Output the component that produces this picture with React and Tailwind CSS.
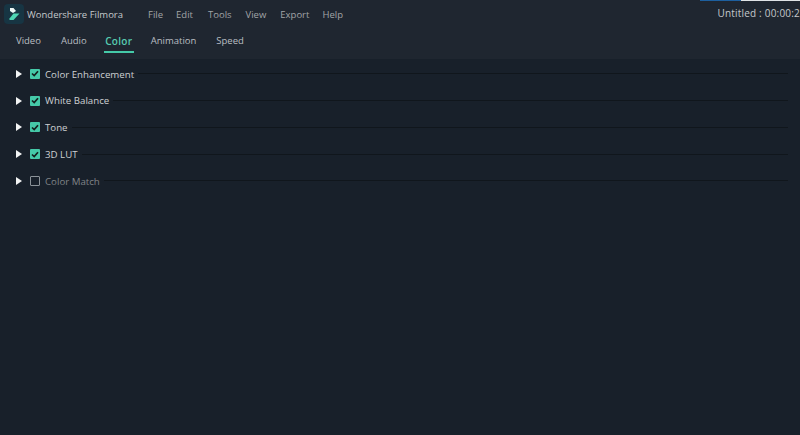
const font = { fontFamily: '"Open Sans", sans-serif' };

function Row({ label, checked }) {
  return (
    <div className="flex h-[26.75px] items-center pl-[16px] pr-[12px]">
      <svg width="6" height="8" viewBox="0 0 6 8" className="shrink-0">
        <path d="M0 0 L6 4 L0 8 Z" fill="#f2f4f4" />
      </svg>
      {checked ? (
        <div className="ml-[8px] flex h-[10px] w-[10px] shrink-0 items-center justify-center rounded-[1px] bg-[#45c9a8]">
          <svg width="8" height="7" viewBox="0 0 8 7">
            <path d="M1 3.5 L3.2 5.6 L7 1.2" fill="none" stroke="#14201f" strokeWidth="1.7" />
          </svg>
        </div>
      ) : (
        <div className="ml-[8px] h-[10px] w-[10px] shrink-0 rounded-[1px] border border-[#8b9298]" />
      )}
      <span className={`ml-[5px] whitespace-nowrap pt-[1px] text-[9.7px] leading-none ${checked ? "text-[#cdd0d2]" : "text-[#808487]"}`}>
        {label}
      </span>
      <div className="ml-[4px] h-px flex-1 bg-[#10161c]" />
    </div>
  );
}

export default function App() {
  const menu = [
    ["File", "ml-[25px]"],
    ["Edit", "ml-[13px]"],
    ["Tools", "ml-[15px]"],
    ["View", "ml-[14px]"],
    ["Export", "ml-[14px]"],
    ["Help", "ml-[13px]"],
  ];
  const tabs = [
    { t: "Video", w: "ml-[16px] text-[9.5px]" },
    { t: "Audio", w: "ml-[20px] text-[9.5px]" },
    { t: "Color", w: "ml-[17px] w-[30px] justify-center text-[10px] tracking-[0.3px]", active: true },
    { t: "Animation", w: "ml-[17px] text-[9.5px]" },
    { t: "Speed", w: "ml-[20px] text-[9.5px]" },
  ];
  return (
    <div className="flex h-[435px] w-[800px] flex-col overflow-hidden bg-[#18202a]" style={font}>
      <header className="relative flex h-[28px] shrink-0 items-center bg-[#1f2630]">
        <div className="absolute right-0 top-0 flex h-px">
          <div className="h-px w-[41px] bg-[#1d5f9e]" />
          <div className="h-px w-[59px] bg-[#dfe3e6]" />
        </div>
        <div className="ml-[4px] flex h-[20px] w-[20px] items-center justify-center rounded-[4px] bg-[#173543]">
          <svg width="14" height="16" viewBox="0 0 14 16">
            <path d="M3 2 L6.5 2 L9 5 L6 7 L3 5 Z" fill="#eef7f5" />
            <path d="M2.5 12.5 L6.5 7.5 L12.5 7.5 L6.5 14 L2.5 14 Z" fill="#4fd6b4" />
          </svg>
        </div>
        <span className="ml-[3px] pt-[1px] text-[9.5px] leading-none text-[#c5c9cc]">Wondershare Filmora</span>
        {menu.map(([m, c]) => (
          <span key={m} className={`${c} pt-[1px] text-[9.5px] leading-none text-[#a1a4a7]`}>{m}</span>
        ))}
        <span className="ml-auto -translate-y-px whitespace-nowrap pl-2 text-[10px] leading-none tracking-[0.2px] text-[#c5c9cc]">Untitled : 00:00:2</span>
      </header>
      <nav className="flex h-[31px] shrink-0 bg-[#1f2630]">
        {tabs.map(({ t, w, active }) => (
          <div key={t} className={`${w} flex h-[25px] items-center border-b-2 pt-[2px] leading-none ${active ? "border-[#45c9a8] font-semibold text-[#57cdb0]" : "border-transparent text-[#b9bec2]"}`}>
            {t}
          </div>
        ))}
      </nav>
      <main className="pt-[1.5px]">
        <Row label="Color Enhancement" checked />
        <Row label="White Balance" checked />
        <Row label="Tone" checked />
        <Row label="3D LUT" checked />
        <Row label="Color Match" />
      </main>
    </div>
  );
}
